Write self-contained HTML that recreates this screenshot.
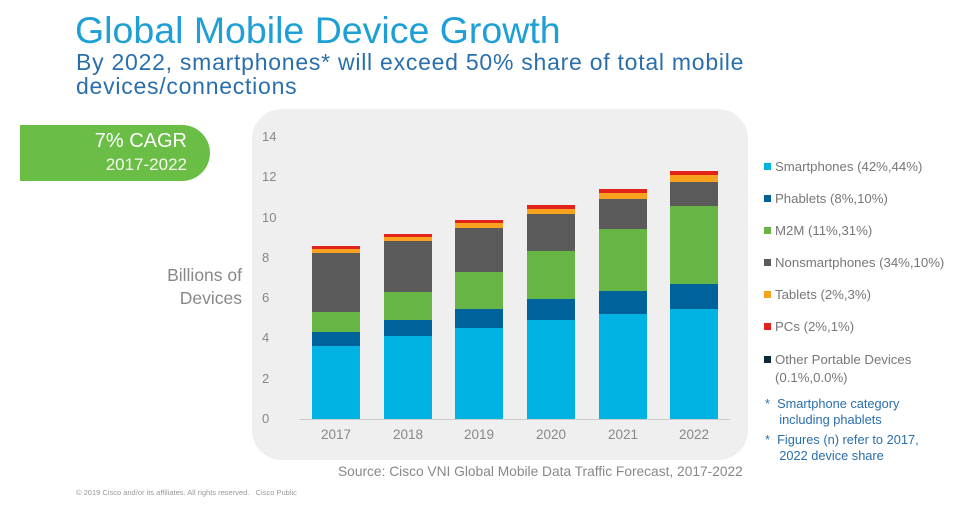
<!DOCTYPE html>
<html><head><meta charset="utf-8"><style>
*{margin:0;padding:0;box-sizing:border-box}
body{width:972px;height:510px;background:#fff;position:relative;overflow:hidden;font-family:"Liberation Sans",sans-serif}
.a{position:absolute;white-space:nowrap}
.b{position:absolute}
.yl{position:absolute;left:262px;width:30px;text-align:left;font-size:13px;color:#888;line-height:14px}
.xl{position:absolute;top:427px;width:60px;text-align:center;font-size:13.5px;color:#888}
.lg{position:absolute;left:775px;font-size:13.2px;color:#777;line-height:17px;white-space:nowrap}
.sq{position:absolute;left:764px;width:7px;height:7px}
.fn{position:absolute;left:765px;font-size:12.8px;color:#2a6fad;line-height:16px;white-space:nowrap}
</style></head><body>
<div class="a" style="left:75px;top:8px;font-size:37.5px;color:#1e9fd6;line-height:44px">Global Mobile Device Growth</div>
<div class="a" style="left:76px;top:50px;font-size:23px;letter-spacing:0.75px;color:#2a6fad;line-height:24px">By 2022, smartphones* will exceed 50% share of total mobile<br>devices/connections</div>
<div class="b" style="left:20px;top:125px;width:190px;height:56px;background:#6abd45;border-radius:0 28px 28px 0"></div>
<div class="a" style="left:20px;top:130px;width:167px;text-align:right;color:#fff;font-size:20px;line-height:22px">7% CAGR</div>
<div class="a" style="left:20px;top:155px;width:167px;text-align:right;color:#f4f9ee;font-size:17px;line-height:20px">2017-2022</div>
<div class="a" style="left:140px;top:264px;width:102px;text-align:right;color:#888;font-size:17.5px;line-height:23px">Billions of<br>Devices</div>
<div class="b" style="left:252px;top:109px;width:496px;height:351px;background:#efefef;border-radius:30px"></div>
<div class="yl" style="top:130px">14</div><div class="yl" style="top:170px">12</div><div class="yl" style="top:211px">10</div><div class="yl" style="top:251px">8</div><div class="yl" style="top:291px">6</div><div class="yl" style="top:331px">4</div><div class="yl" style="top:372px">2</div><div class="yl" style="top:412px">0</div>
<div class="b" style="left:300px;top:419px;width:430px;height:1px;background:#ccc"></div>
<svg class="b" style="left:0;top:0" width="972" height="510">
<rect x="312" y="346" width="48" height="73" fill="#00b3e3"/><rect x="312" y="332" width="48" height="14" fill="#00629b"/><rect x="312" y="312" width="48" height="20" fill="#66b545"/><rect x="312" y="253" width="48" height="59" fill="#5a5a5a"/><rect x="312" y="249" width="48" height="4" fill="#f8a21f"/><rect x="312" y="246" width="48" height="3" fill="#e2231a"/>
<rect x="384" y="336" width="48" height="83" fill="#00b3e3"/><rect x="384" y="320" width="48" height="16" fill="#00629b"/><rect x="384" y="292" width="48" height="28" fill="#66b545"/><rect x="384" y="241" width="48" height="51" fill="#5a5a5a"/><rect x="384" y="237" width="48" height="4" fill="#f8a21f"/><rect x="384" y="234" width="48" height="3" fill="#e2231a"/>
<rect x="455" y="328" width="48" height="91" fill="#00b3e3"/><rect x="455" y="309" width="48" height="19" fill="#00629b"/><rect x="455" y="272" width="48" height="37" fill="#66b545"/><rect x="455" y="228" width="48" height="44" fill="#5a5a5a"/><rect x="455" y="223" width="48" height="5" fill="#f8a21f"/><rect x="455" y="220" width="48" height="3" fill="#e2231a"/>
<rect x="527" y="320" width="48" height="99" fill="#00b3e3"/><rect x="527" y="299" width="48" height="21" fill="#00629b"/><rect x="527" y="251" width="48" height="48" fill="#66b545"/><rect x="527" y="214" width="48" height="37" fill="#5a5a5a"/><rect x="527" y="209" width="48" height="5" fill="#f8a21f"/><rect x="527" y="205" width="48" height="4" fill="#e2231a"/>
<rect x="599" y="314" width="48" height="105" fill="#00b3e3"/><rect x="599" y="291" width="48" height="23" fill="#00629b"/><rect x="599" y="229" width="48" height="62" fill="#66b545"/><rect x="599" y="199" width="48" height="30" fill="#5a5a5a"/><rect x="599" y="193" width="48" height="6" fill="#f8a21f"/><rect x="599" y="189" width="48" height="4" fill="#e2231a"/>
<rect x="670" y="309" width="48" height="110" fill="#00b3e3"/><rect x="670" y="284" width="48" height="25" fill="#00629b"/><rect x="670" y="206" width="48" height="78" fill="#66b545"/><rect x="670" y="182" width="48" height="24" fill="#5a5a5a"/><rect x="670" y="175" width="48" height="7" fill="#f8a21f"/><rect x="670" y="171" width="48" height="4" fill="#e2231a"/>
</svg>
<div class="xl" style="left:306px">2017</div><div class="xl" style="left:378px">2018</div><div class="xl" style="left:449px">2019</div><div class="xl" style="left:521px">2020</div><div class="xl" style="left:593px">2021</div><div class="xl" style="left:664px">2022</div>
<div class="a" style="left:338px;top:464px;font-size:13.75px;color:#888">Source: Cisco VNI Global Mobile Data Traffic Forecast, 2017-2022</div>
<div class="sq" style="top:163px;background:#00b3e3"></div><div class="lg" style="top:158px">Smartphones (42%,44%)</div>
<div class="sq" style="top:195px;background:#00629b"></div><div class="lg" style="top:190px">Phablets (8%,10%)</div>
<div class="sq" style="top:227px;background:#66b545"></div><div class="lg" style="top:222px">M2M (11%,31%)</div>
<div class="sq" style="top:259px;background:#5a5a5a"></div><div class="lg" style="top:254px">Nonsmartphones (34%,10%)</div>
<div class="sq" style="top:291px;background:#f8a21f"></div><div class="lg" style="top:286px">Tablets (2%,3%)</div>
<div class="sq" style="top:323px;background:#e2231a"></div><div class="lg" style="top:318px">PCs (2%,1%)</div>
<div class="sq" style="top:356px;background:#0b2a3a"></div><div class="lg" style="top:351px;line-height:18px">Other Portable Devices<br>(0.1%,0.0%)</div>
<div class="fn" style="top:396px">*&nbsp; Smartphone category<br>&nbsp;&nbsp;&nbsp; including phablets</div>
<div class="fn" style="top:432px">*&nbsp; Figures (n) refer to 2017,<br>&nbsp;&nbsp;&nbsp; 2022 device share</div>
<div class="a" style="left:76px;top:488px;font-size:7.5px;color:#999">© 2019 Cisco and/or its affiliates. All rights reserved.&nbsp;&nbsp; Cisco Public</div>
</body></html>
